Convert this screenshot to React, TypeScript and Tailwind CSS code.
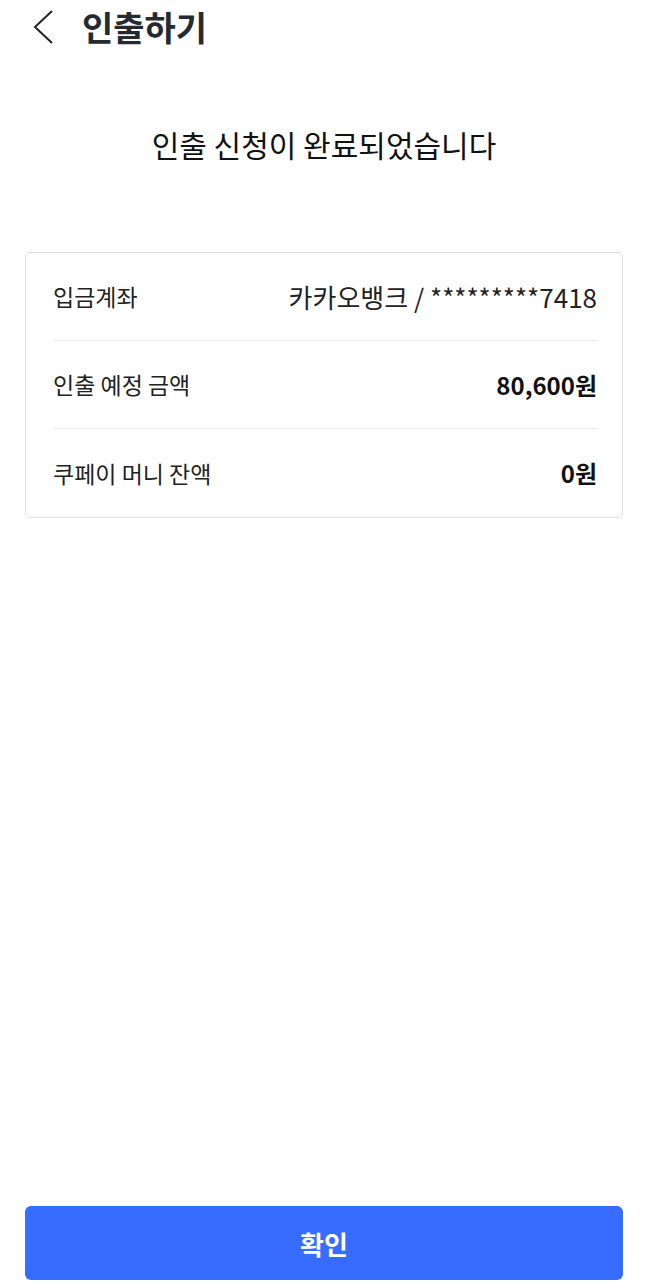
const rows = [
  { label: '입금계좌', value: '카카오뱅크 / *********7418', bold: false },
  { label: '인출 예정 금액', value: '80,600원', bold: true },
  { label: '쿠페이 머니 잔액', value: '0원', bold: true },
];

export default function App() {
  return (
    <div
      className="flex h-[1286px] w-[648px] flex-col bg-white text-[#111]"
      style={{ fontFamily: '"Noto Sans CJK KR", "Noto Sans", sans-serif' }}
    >
      <header className="flex h-[54px] items-center pl-[32px]">
        <svg width="22" height="36" viewBox="0 0 22 36" fill="none" className="text-[#222]">
          <polyline points="20,2 3,18 20,34" stroke="currentColor" strokeWidth="2" strokeLinejoin="miter" />
        </svg>
        <h1 className="ml-[28px] text-[34px] font-bold leading-none text-[#252a31]">인출하기</h1>
      </header>

      <p className="mt-[75px] text-center text-[30px] leading-none text-[#111]">인출 신청이 완료되었습니다</p>

      <section className="mx-[25px] mt-[93px] rounded-[5px] border border-[#e1e1e1] pl-[27px] pr-[25px]">
        {rows.map((row, i) => (
          <div
            key={row.label}
            className={
              'flex h-[88px] items-center justify-between ' + (i < rows.length - 1 ? 'border-b border-[#ebebeb]' : '')
            }
          >
            <span className="text-[23px] text-[#222]">{row.label}</span>
            <span className={row.bold ? 'text-[24px] font-bold text-[#111]' : 'text-[26px] text-[#222]'}>
              {row.value}
            </span>
          </div>
        ))}
      </section>

      <div className="flex-1" />

      <div className="px-[25px] pb-[6px]">
        <button className="flex h-[74px] w-full items-center justify-center rounded-[6px] bg-[#366cff] text-[26px] font-bold text-white">
          확인
        </button>
      </div>
    </div>
  );
}
